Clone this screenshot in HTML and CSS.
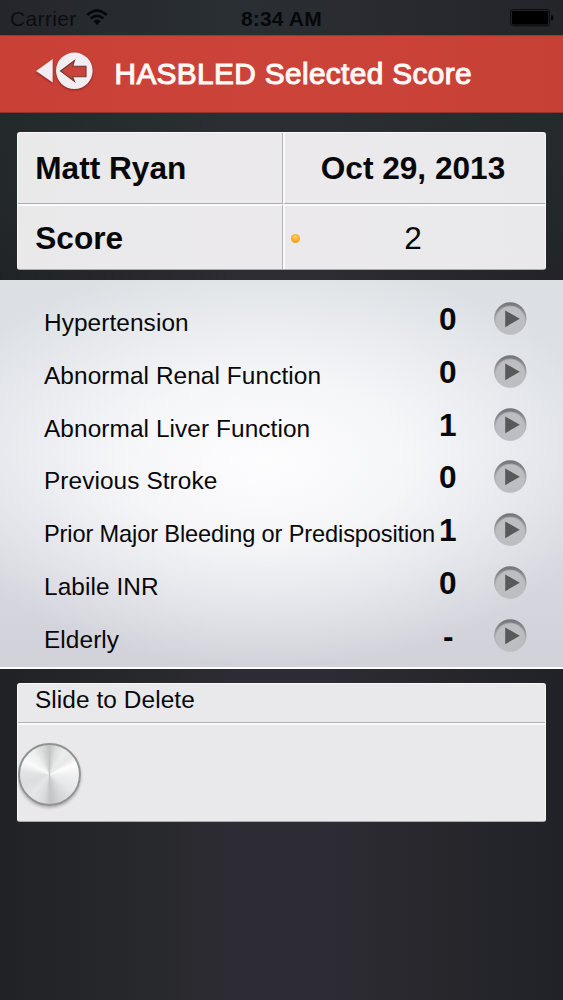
FILE: index.html
```html
<!DOCTYPE html>
<html lang="en">
<head>
<meta charset="utf-8">
<title>HASBLED Selected Score</title>
<link rel="stylesheet" href="styles.css">
</head>
<body>
<svg class="defs" width="0" height="0" aria-hidden="true">
  <defs>
    <linearGradient id="rim" x1="0" y1="0" x2="0" y2="1">
      <stop offset="0" stop-color="#737478"/><stop offset=".3" stop-color="#8f9094"/><stop offset=".6" stop-color="#adaeb2"/><stop offset="1" stop-color="#c6c7cb"/>
    </linearGradient>
    <radialGradient id="floor" cx=".5" cy=".5" r=".5">
      <stop offset="0" stop-color="#bfc0c4"/><stop offset=".88" stop-color="#bcbdc1"/><stop offset="1" stop-color="#bcbdc1" stop-opacity="0"/>
    </radialGradient>
    <symbol id="play" viewBox="0 0 34 34">
      <circle cx="16.3" cy="16.5" r="16.2" fill="url(#rim)"/>
      <ellipse cx="16.3" cy="18.2" rx="15.7" ry="15.2" fill="url(#floor)"/>
      <path d="M11.2 8.5L25.8 16.8L11.2 25.2Z" fill="#58595b"/>
    </symbol>
  </defs>
</svg>
<div class="screen">
  <div class="status">
    <span class="carrier">Carrier</span>
    <svg class="wifi" width="22" height="17" viewBox="0 0 22 17">
      <path d="M1.3 5.9Q11-2.7 20.7 5.9M4.7 9.6Q11 4.2 17.3 9.6" fill="none" stroke="#07080b" stroke-width="2.7"/>
      <path d="M7.2 12.1Q11 8.8 14.8 12.1L11 16Z" fill="#07080b"/>
    </svg>
    <span class="time">8:34 AM</span>
    <svg class="battery" width="44" height="18" viewBox="0 0 44 18">
      <rect x=".7" y=".7" width="38.6" height="16.1" rx="2" fill="none" stroke="#0b0b0e" stroke-width="1"/>
      <rect x="2" y="2" width="36" height="13.5" rx="1" fill="#000"/>
      <path d="M41 5.8Q43.5 6.5 43.5 8.8T41 11.8Z" fill="#050508"/>
    </svg>
  </div>
  <header class="bar">
    <svg class="back" width="60" height="42" viewBox="0 0 60 42">
      <g class="shape"><path d="M1 20L17.7 8V31.4Z"/><circle cx="39.3" cy="19.8" r="18.3"/></g>
      <path d="M25.6 20L39.5 9.6L37.6 15.2H51V25.8H37.6L39.5 30.4Z" fill="#c8443a" stroke="#713632" stroke-width="1.1"/>
    </svg>
    <h1>HASBLED Selected Score</h1>
  </header>
  <section class="card summary">
    <div class="cell name">Matt Ryan</div>
    <div class="cell center date">Oct 29, 2013</div>
    <div class="cell name">Score</div>
    <div class="cell center value"><i class="dot"></i>2</div>
  </section>
  <main class="list">
    <div class="row"><span class="label">Hypertension</span><b>0</b><svg class="play"><use href="#play"/></svg></div>
    <div class="row"><span class="label">Abnormal Renal Function</span><b>0</b><svg class="play"><use href="#play"/></svg></div>
    <div class="row"><span class="label">Abnormal Liver Function</span><b>1</b><svg class="play"><use href="#play"/></svg></div>
    <div class="row"><span class="label">Previous Stroke</span><b>0</b><svg class="play"><use href="#play"/></svg></div>
    <div class="row"><span class="label long">Prior Major Bleeding or Predisposition</span><b>1</b><svg class="play"><use href="#play"/></svg></div>
    <div class="row"><span class="label">Labile INR</span><b>0</b><svg class="play"><use href="#play"/></svg></div>
    <div class="row"><span class="label">Elderly</span><b>-</b><svg class="play"><use href="#play"/></svg></div>
  </main>
  <section class="card slider">
    <div class="caption">Slide to Delete</div>
    <div class="track"><div class="knob"></div></div>
  </section>
</div>
</body>
</html>
```
FILE: styles.css
```css
* { box-sizing: border-box; }
body { margin: 0; font-family: "Liberation Sans", Arial, sans-serif; color: #08080a; }
.defs { display: block; height: 0; }
.screen {
  width: 563px; height: 1000px; overflow: hidden;
  display: flex; flex-direction: column;
  background:
    linear-gradient(180deg, rgba(40, 50, 50, .55) 0, rgba(40, 50, 50, .4) 200px, rgba(40, 46, 46, 0) 300px),
    linear-gradient(90deg, #202225 0, #28292c 28%, #2d2c34 42%, #2d2c34 58%, #27272c 78%, #212227 100%);
}
.status {
  flex: none; height: 35px; padding: 0 10px;
  display: grid; grid-template-columns: 76px 155px 269px 1fr;
  background: linear-gradient(90deg, #25262b, #292f33 42%, #2a2b31 65%, #242529);
  font-size: 21px; line-height: 37px; color: #07080b;
}
.carrier { letter-spacing: .35px; color: #0c0d10; }
.wifi { margin-top: 9px; }
.time { font-weight: bold; white-space: nowrap; letter-spacing: .15px; }
.battery { margin-top: 9px; }
.bar {
  flex: none; height: 78px; padding-left: 35px;
  display: flex; align-items: flex-start;
  background: linear-gradient(90deg, #c94037, #cb4339 50%, #c74036);
  border-top: 1px solid #963b37; border-bottom: 1px solid #92342f;
}
.back { flex: none; margin-top: 15px; }
.shape { fill: #f1edf0; filter: drop-shadow(0 1.5px 1px rgba(80, 20, 20, .65)); }
.bar h1 {
  margin: 0 0 0 19.5px; font-size: 29.8px; font-weight: normal; line-height: 76px;
  letter-spacing: .36px; color: #fff7f4; -webkit-text-stroke: 1.1px #fff7f4; white-space: nowrap;
}
.card {
  flex: none; margin-left: 17px; width: 529px; height: 138px; border-radius: 3px;
  background: #e9e9eb; border: 1px solid #f8f8f9; border-bottom-color: #a9acad;
  overflow: hidden;
}
.summary {
  margin-top: 19px;
  display: grid; grid-template-columns: 265px 1fr; grid-template-rows: 71px 65px;
  background: linear-gradient(90deg, #e9e9ea, #ebe9ec 50%, #e9e9eb);
}
.cell { font-size: 31.6px; line-height: 70px; white-space: nowrap; }
.name { font-weight: bold; padding-left: 17.3px; border-right: 1px solid #b3b5bb; }
.date { font-weight: bold; }
.center { text-align: center; padding-right: 4px; border-left: 2px solid #fafafa; }
.cell:nth-child(-n+2) { border-bottom: 1px solid #acadb3; }
.cell:nth-child(n+3) { border-top: 2px solid #fafafa; line-height: 64px; }
.value { position: relative; }
.dot {
  position: absolute; left: 6px; top: 27.5px; width: 9px; height: 9px; border-radius: 50%;
  background: radial-gradient(circle at 50% 35%, #ffd456, #f5a51f 65%, #d98a20);
}
.list {
  flex: none; height: 389px; margin-top: 10px; padding: 13px 0 0 44px;
  border-bottom: 2px solid #fbfbfc;
  background:
    radial-gradient(ellipse 350px 205px at 47% 47%, #fdfdfe 0, rgba(250, 250, 252, .85) 40%, rgba(236, 237, 241, 0) 100%),
    linear-gradient(180deg, #dce0e3, #dde0e6 45%, #d1d1d9);
}
.row { height: 52.83px; display: grid; grid-template-columns: 395px 55px 34px; }
.label { font-size: 24.4px; line-height: 60px; white-space: nowrap; letter-spacing: .08px; }
.long { font-size: 23.6px; letter-spacing: -.13px; }
.row b { font-size: 31.6px; line-height: 52px; }
.row:last-child b { padding-left: 4px; }
.play { width: 34px; height: 34px; margin-top: 9px; }
.slider { margin-top: 14px; height: 139px; }
.caption {
  height: 39px; padding-left: 17px; font-size: 24.4px; line-height: 31px; letter-spacing: .08px;
  border-bottom: 1px solid #b1b2b6;
}
.track { height: 98px; padding-top: 18px; border-top: 2px solid #fafafa; }
.knob {
  width: 63px; height: 63px; border-radius: 50%; border: 2px solid #929395;
  background: conic-gradient(#c3c5c5 0deg, #dcdddd 14deg, #ebecec 32deg, #e6e7e7 50deg, #fdfdfd 68deg, #f0f0f1 90deg, #e6e7e8 125deg, #d8d9da 150deg, #c3c4c6 178deg, #dcdddf 195deg, #e6e6e8 220deg, #dcdddf 250deg, #e2e3e4 275deg, #fafafa 298deg, #eeefef 325deg, #d8d9d9 345deg, #c3c5c5 360deg);
  box-shadow: 0 2px 3px rgba(0, 0, 0, .25);
}
```
